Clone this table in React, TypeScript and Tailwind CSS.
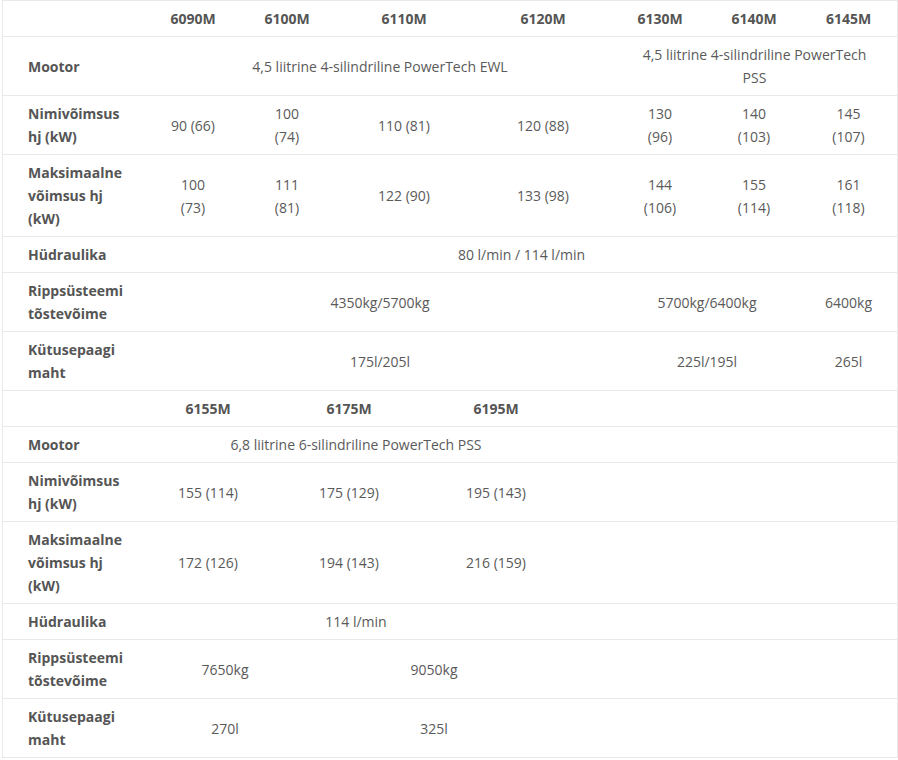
import React from "react";

type Cell = { w: string; text?: React.ReactNode; bold?: boolean };

function Row({ label, cells, header }: { label?: React.ReactNode; cells: Cell[]; header?: boolean }) {
  return (
    <div className="flex items-center border-b border-[#e9e9e9]">
      <div className="w-[144px] shrink-0 py-[6px] pl-[25px] pr-[6px] font-bold text-[#555] whitespace-nowrap">
        {label}
      </div>
      {cells.map((c, i) => (
        <div
          key={i}
          className={
            (c.w === "flex" ? "flex-1 " : "shrink-0 ") +
            "py-[6px] text-center whitespace-nowrap " +
            (header || c.bold ? "font-bold text-[#555]" : "text-[#5a5a5a]")
          }
          style={c.w === "flex" ? undefined : { width: c.w }}
        >
          {c.text ?? "\u00a0"}
        </div>
      ))}
    </div>
  );
}

export default function App() {
  const t1 = ["92px", "96px", "138px", "140px", "94px", "94px", "95px"];
  return (
    <div className="bg-white min-h-[760px]" style={{ fontFamily: "'Open Sans', 'Liberation Sans', sans-serif" }}>
      <div className="ml-[2px] w-[896px] border-x border-t border-[#e9e9e9] text-[14px] leading-[23px]">
        <Row
          header
          cells={["6090M", "6100M", "6110M", "6120M", "6130M", "6140M", "6145M"].map((t, i) => ({ w: t1[i], text: t }))}
        />
        <Row
          label="Mootor"
          cells={[
            { w: "466px", text: "4,5 liitrine 4-silindriline PowerTech EWL" },
            { w: "283px", text: <>4,5 liitrine 4-silindriline PowerTech<br />PSS</> },
          ]}
        />
        <Row
          label={<>Nimivõimsus<br />hj (kW)</>}
          cells={[
            { w: t1[0], text: "90 (66)" },
            { w: t1[1], text: <>100<br />(74)</> },
            { w: t1[2], text: "110 (81)" },
            { w: t1[3], text: "120 (88)" },
            { w: t1[4], text: <>130<br />(96)</> },
            { w: t1[5], text: <>140<br />(103)</> },
            { w: t1[6], text: <>145<br />(107)</> },
          ]}
        />
        <Row
          label={<>Maksimaalne<br />võimsus hj<br />(kW)</>}
          cells={[
            { w: t1[0], text: <>100<br />(73)</> },
            { w: t1[1], text: <>111<br />(81)</> },
            { w: t1[2], text: "122 (90)" },
            { w: t1[3], text: "133 (98)" },
            { w: t1[4], text: <>144<br />(106)</> },
            { w: t1[5], text: <>155<br />(114)</> },
            { w: t1[6], text: <>161<br />(118)</> },
          ]}
        />
        <Row label="Hüdraulika" cells={[{ w: "749px", text: "80 l/min / 114 l/min" }]} />
        <Row
          label={<>Rippsüsteemi<br />tõstevõime</>}
          cells={[
            { w: "466px", text: "4350kg/5700kg" },
            { w: "188px", text: "5700kg/6400kg" },
            { w: "95px", text: "6400kg" },
          ]}
        />
        <Row
          label={<>Kütusepaagi<br />maht</>}
          cells={[
            { w: "466px", text: "175l/205l" },
            { w: "188px", text: "225l/195l" },
            { w: "95px", text: "265l" },
          ]}
        />
        <Row
          header
          cells={[
            { w: "122px", text: "6155M" },
            { w: "160px", text: "6175M" },
            { w: "134px", text: "6195M" },
            { w: "flex" },
          ]}
        />
        <Row label="Mootor" cells={[{ w: "418px", text: "6,8 liitrine 6-silindriline PowerTech PSS" }, { w: "flex" }]} />
        <Row
          label={<>Nimivõimsus<br />hj (kW)</>}
          cells={[
            { w: "122px", text: "155 (114)" },
            { w: "160px", text: "175 (129)" },
            { w: "134px", text: "195 (143)" },
            { w: "flex" },
          ]}
        />
        <Row
          label={<>Maksimaalne<br />võimsus hj<br />(kW)</>}
          cells={[
            { w: "122px", text: "172 (126)" },
            { w: "160px", text: "194 (143)" },
            { w: "134px", text: "216 (159)" },
            { w: "flex" },
          ]}
        />
        <Row label="Hüdraulika" cells={[{ w: "418px", text: "114 l/min" }, { w: "flex" }]} />
        <Row
          label={<>Rippsüsteemi<br />tõstevõime</>}
          cells={[
            { w: "156px", text: "7650kg" },
            { w: "262px", text: "9050kg" },
            { w: "flex" },
          ]}
        />
        <Row
          label={<>Kütusepaagi<br />maht</>}
          cells={[
            { w: "156px", text: "270l" },
            { w: "262px", text: "325l" },
            { w: "flex" },
          ]}
        />
      </div>
    </div>
  );
}
